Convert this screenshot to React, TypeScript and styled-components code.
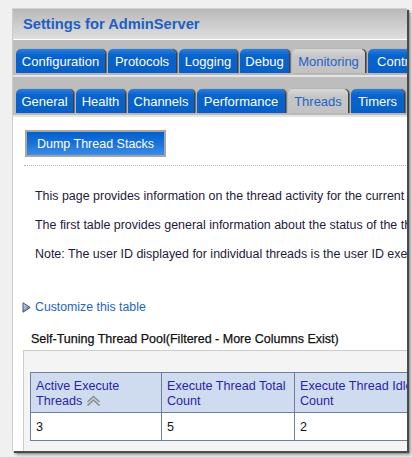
import styled, { createGlobalStyle } from "styled-components"

const GlobalStyle = createGlobalStyle`
  html, body {
    margin: 0;
    padding: 0;
    background: #f0f0f0;
    font-family: "Liberation Sans", Arial, sans-serif;
  }
`

const Frame = styled.div`
  width: 412px;
  height: 457px;
  padding: 8px 0 0 12px;
  box-sizing: border-box;
  overflow: hidden;
`

const Panel = styled.div`
  width: 395px;
  height: 443px;
  box-sizing: border-box;
  border-top: 1px solid #d2d2d2;
  border-left: 1px solid #cdcdcd;
  background: #fff;
  overflow: hidden;
  box-shadow: 2px 2px 1px #4a4a4a, 4px 4px 3px rgba(0, 0, 0, 0.35);
  display: flex;
  flex-direction: column;
`

const TitleBar = styled.div`
  height: 30px;
  flex: none;
  display: flex;
  align-items: center;
  padding-left: 10px;
  background: linear-gradient(#b9b9b9, #dedede);
  border-bottom: 1px solid #ffffff;
  font-size: 14.7px;
  font-weight: bold;
  color: #1d5fc4;
  white-space: nowrap;
`

const TabBar = styled.div<{ $top: number }>`
  flex: none;
  display: flex;
  padding: ${p => p.$top}px 0 2px 3px;
  background: #bdbdbd;
  border-bottom: 2px solid #e4e4e4;
  white-space: nowrap;
`

const Tab = styled.div<{ $w: number; $active?: boolean }>`
  flex: none;
  width: ${p => p.$w}px;
  height: 24px;
  margin-right: 3px;
  box-sizing: border-box;
  border-radius: 5px 5px 0 0;
  font-size: 13px;
  line-height: 25px;
  text-align: center;
  overflow: hidden;
  color: ${p => (p.$active ? "#1f63c8" : "#ffffff")};
  background: ${p =>
    p.$active
      ? "linear-gradient(#d8d8d8, #c6c6c6 30%, #c2c2c2)"
      : "linear-gradient(#2f7fd8, #0763cd 25%, #0660c8)"};
  box-shadow: 1px 0 0 #404040, 2px 0 1px #6a6a6a;
`

const Content = styled.div`
  flex: 1;
  padding: 13px 0 0 10px;
  color: #1f1a3c;
  font-size: 13px;
`

const Button = styled.div`
  width: 141px;
  height: 27px;
  margin-left: 2px;
  box-sizing: border-box;
  border: 2px solid #a6a6a6;
  background: linear-gradient(#0060cd, #1a72da 50%, #3b8de6);
  color: #fff;
  font-size: 12.5px;
  line-height: 24px;
  text-align: center;
`

const Dotted = styled.div`
  margin: 8px 0 0 1px;
  width: 420px;
  border-top: 1px dotted #b4b4b4;
`

const Paragraph = styled.p<{ $gap: number }>`
  margin: ${p => p.$gap}px 0 0;
  padding-left: 12px;
  font-size: 12.45px;
  line-height: 16px;
  white-space: nowrap;
`

const LinkRow = styled.div`
  display: flex;
  align-items: center;
  gap: 4px;
  margin: 37px 0 0 -1px;
  color: #1f63c6;
  font-size: 12.3px;
  line-height: 16px;
`

const SectionTitle = styled.div`
  margin-top: 16px;
  padding-left: 8px;
  font-size: 12.5px;
  line-height: 16px;
  color: #111;
  white-space: nowrap;
  -webkit-text-stroke: 0.25px #111;
`

const TableBox = styled.div`
  margin-top: 3px;
  width: 440px;
  height: 120px;
  box-sizing: border-box;
  border: 1px solid #cccccc;
  background: #f4f4f4;
  padding: 21px 0 0 6px;
`

const Table = styled.table`
  border-collapse: collapse;
  table-layout: fixed;
  width: 400px;
  font-size: 12.6px;
`

const HeadCell = styled.th<{ $w: number }>`
  width: ${p => p.$w}px;
  height: 40px;
  box-sizing: border-box;
  padding: 2px 5px 0;
  border: 1.5px solid #6c819e;
  background: #cfdcef;
  color: #2a1fa6;
  font-weight: normal;
  text-align: left;
  vertical-align: middle;
  line-height: 15px;
  white-space: nowrap;
`

const Cell = styled.td`
  height: 28px;
  box-sizing: border-box;
  padding: 1px 5px 0;
  border: 1.5px solid #6c819e;
  background: #fff;
  color: #111;
`

const SortIcon = () => (
  <svg width="15" height="11" viewBox="0 0 15 11" style={{ marginLeft: 4, verticalAlign: -1 }}>
    <path d="M1.5 7 L7.5 1.5 L13.5 7" fill="none" stroke="#8c8c8c" strokeWidth="1.6" />
    <path d="M1.5 10.5 L7.5 5 L13.5 10.5" fill="none" stroke="#8c8c8c" strokeWidth="1.6" />
  </svg>
)

const DisclosureIcon = () => (
  <svg width="9" height="11" viewBox="0 0 9 11">
    <defs>
      <linearGradient id="tri" x1="0" y1="0" x2="1" y2="1">
        <stop offset="0" stopColor="#dfe6f3" />
        <stop offset="1" stopColor="#4d6290" />
      </linearGradient>
    </defs>
    <path d="M1 0.8 L8.2 5.5 L1 10.2 Z" fill="url(#tri)" stroke="#3e4f74" strokeWidth="1" />
  </svg>
)

const mainTabs = [
  { label: "Configuration", w: 89 },
  { label: "Protocols", w: 68 },
  { label: "Logging", w: 58 },
  { label: "Debug", w: 49 },
  { label: "Monitoring", w: 73, active: true },
  { label: "Control", w: 60 },
]

const subTabs = [
  { label: "General", w: 57 },
  { label: "Health", w: 49 },
  { label: "Channels", w: 66 },
  { label: "Performance", w: 88 },
  { label: "Threads", w: 60, active: true },
  { label: "Timers", w: 53 },
  { label: "Workload", w: 70 },
]

const paragraphs = [
  "This page provides information on the thread activity for the current server.",
  "The first table provides general information about the status of the thread pool.",
  "Note: The user ID displayed for individual threads is the user ID executing the request.",
]

export default function App() {
  return (
    <>
      <GlobalStyle />
      <Frame>
        <Panel>
          <TitleBar>Settings for AdminServer</TitleBar>
          <TabBar $top={9}>
            {mainTabs.map(t => (
              <Tab key={t.label} $w={t.w} $active={t.active}>{t.label}</Tab>
            ))}
          </TabBar>
          <TabBar $top={12}>
            {subTabs.map(t => (
              <Tab key={t.label} $w={t.w} $active={t.active}>{t.label}</Tab>
            ))}
          </TabBar>
          <Content>
            <Button>Dump Thread Stacks</Button>
            <Dotted />
            {paragraphs.map((text, i) => (
              <Paragraph key={i} $gap={i === 0 ? 22 : 13}>{text}</Paragraph>
            ))}
            <LinkRow>
              <DisclosureIcon />
              Customize this table
            </LinkRow>
            <SectionTitle>Self-Tuning Thread Pool(Filtered - More Columns Exist)</SectionTitle>
            <TableBox>
              <Table>
                <thead>
                  <tr>
                    <HeadCell $w={131}>Active Execute<br />Threads<SortIcon /></HeadCell>
                    <HeadCell $w={133}>Execute Thread Total<br />Count</HeadCell>
                    <HeadCell $w={136}>Execute Thread Idle<br />Count</HeadCell>
                  </tr>
                </thead>
                <tbody>
                  <tr>
                    <Cell>3</Cell>
                    <Cell>5</Cell>
                    <Cell>2</Cell>
                  </tr>
                </tbody>
              </Table>
            </TableBox>
          </Content>
        </Panel>
      </Frame>
    </>
  )
}
